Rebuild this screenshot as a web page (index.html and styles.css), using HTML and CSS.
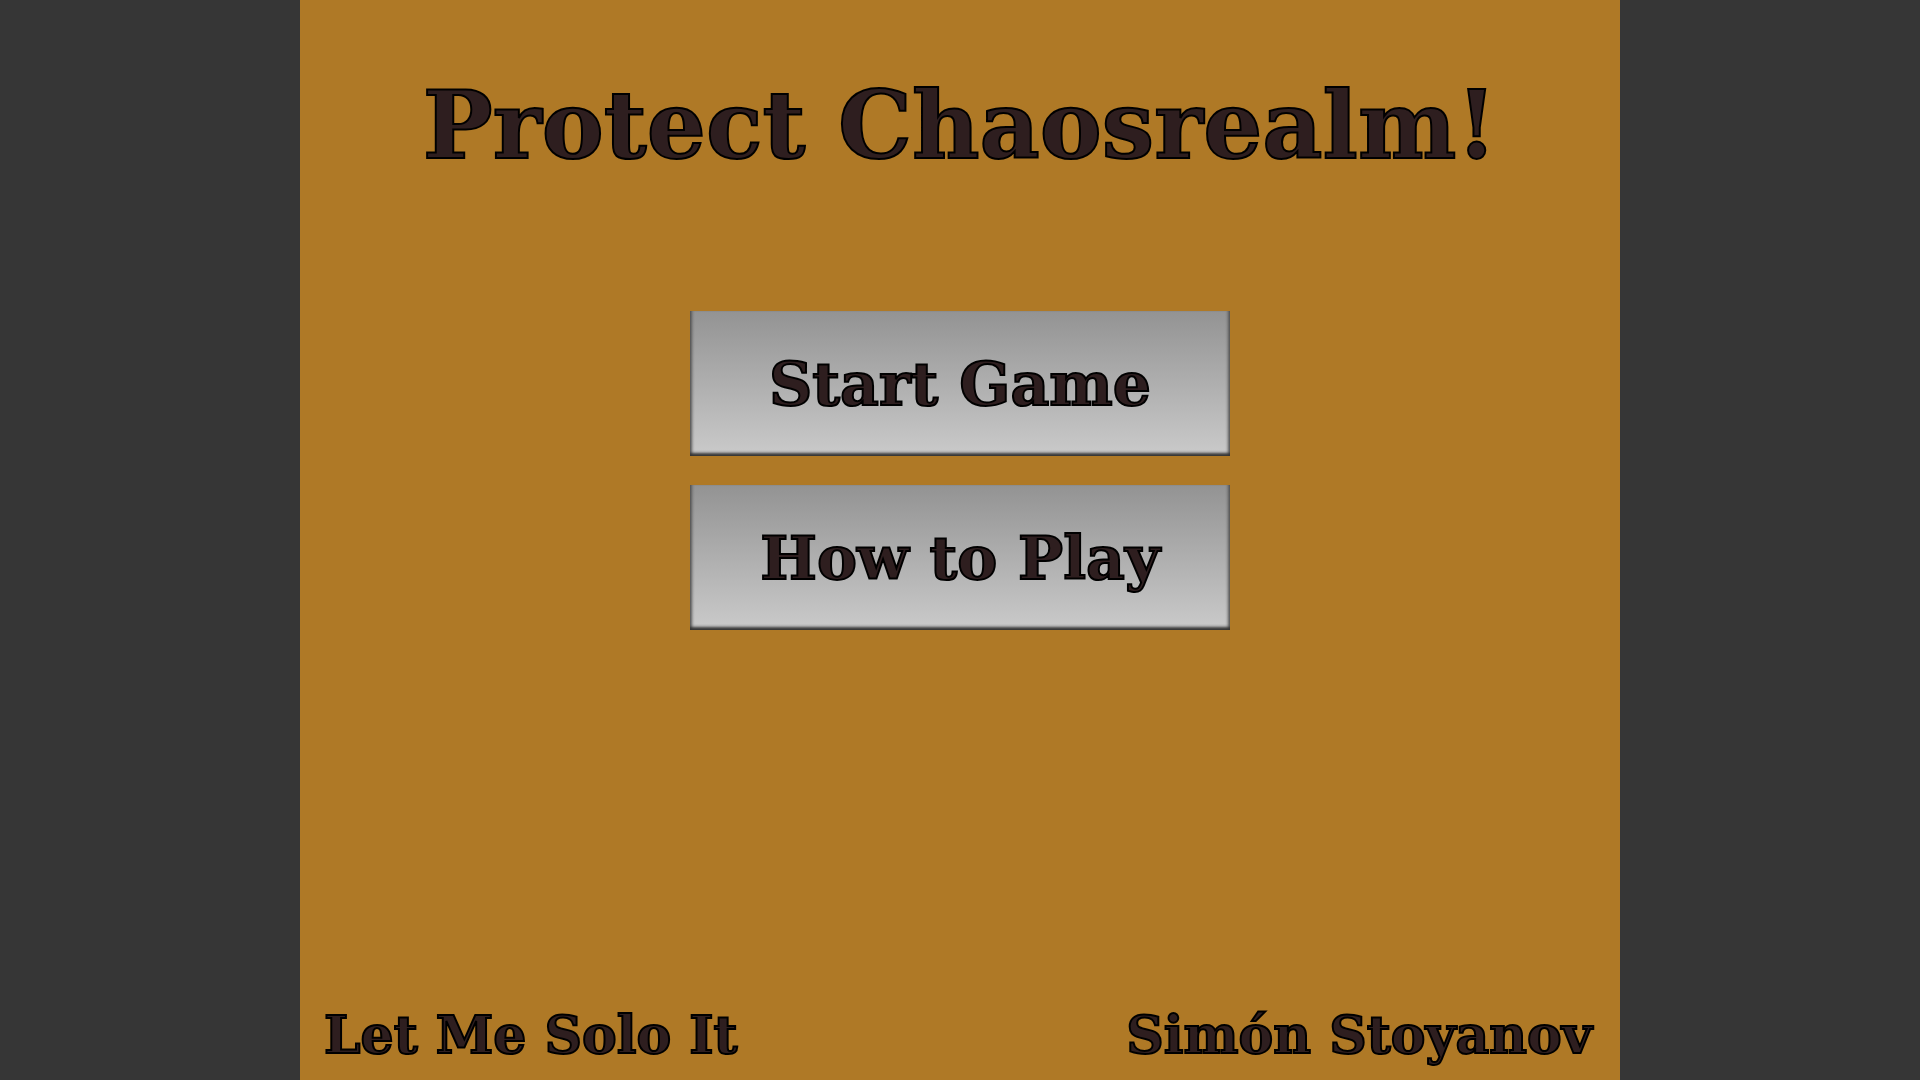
FILE: index.html
```html
<!DOCTYPE html>
<html lang="en">
<head>
  <meta charset="UTF-8" />
  <meta name="viewport" content="width=device-width, initial-scale=1.0"/>
  <title>Protect Chaosrealm!</title>
  <link rel="stylesheet" href="styles.css">
</head>
<body>
  <main class="game">
    <h1 class="title">Protect Chaosrealm!</h1>

    <nav class="menu">
      <button class="menu-button" type="button">Start Game</button>
      <button class="menu-button" type="button">How to Play</button>
    </nav>

    <footer class="credits">
      <span>Let Me Solo It</span>
      <span>Simón Stoyanov</span>
    </footer>
  </main>
</body>
</html>
```
FILE: styles.css
```css
* {
  box-sizing: border-box;
}

body {
  margin: 0;
  background-color: #363636;
  color: #2e1e1f;
  font-family: 'DejaVu Serif', serif;
  font-weight: bold;
  -webkit-text-stroke: 2px #000000;
}

.game {
  display: flex;
  flex-direction: column;
  width: 68.75%;
  min-height: 100vh;
  margin: 0 auto;
  background-color: #af7926;
}

.title {
  margin: 70px 0 0;
  font-size: 93px;
  line-height: 112px;
  text-align: center;
}

.menu {
  display: flex;
  flex-direction: column;
  align-items: center;
  gap: 29px;
  margin-top: 129px;
}

.menu-button {
  width: 540px;
  max-width: 90%;
  height: 145px;
  padding: 0;
  border: none;
  background: linear-gradient(#939393, #cacaca);
  box-shadow: inset 0 -5px 3px -2px #333, inset 4px 0 3px -2px #555, inset -4px 0 3px -2px #555;
  color: inherit;
  font: inherit;
  font-size: 60px;
  -webkit-text-stroke: inherit;
  cursor: pointer;
}

.credits {
  display: flex;
  justify-content: space-between;
  margin-top: auto;
  padding: 0 28px 15px 24px;
  font-size: 52px;
  line-height: 60px;
}
```
